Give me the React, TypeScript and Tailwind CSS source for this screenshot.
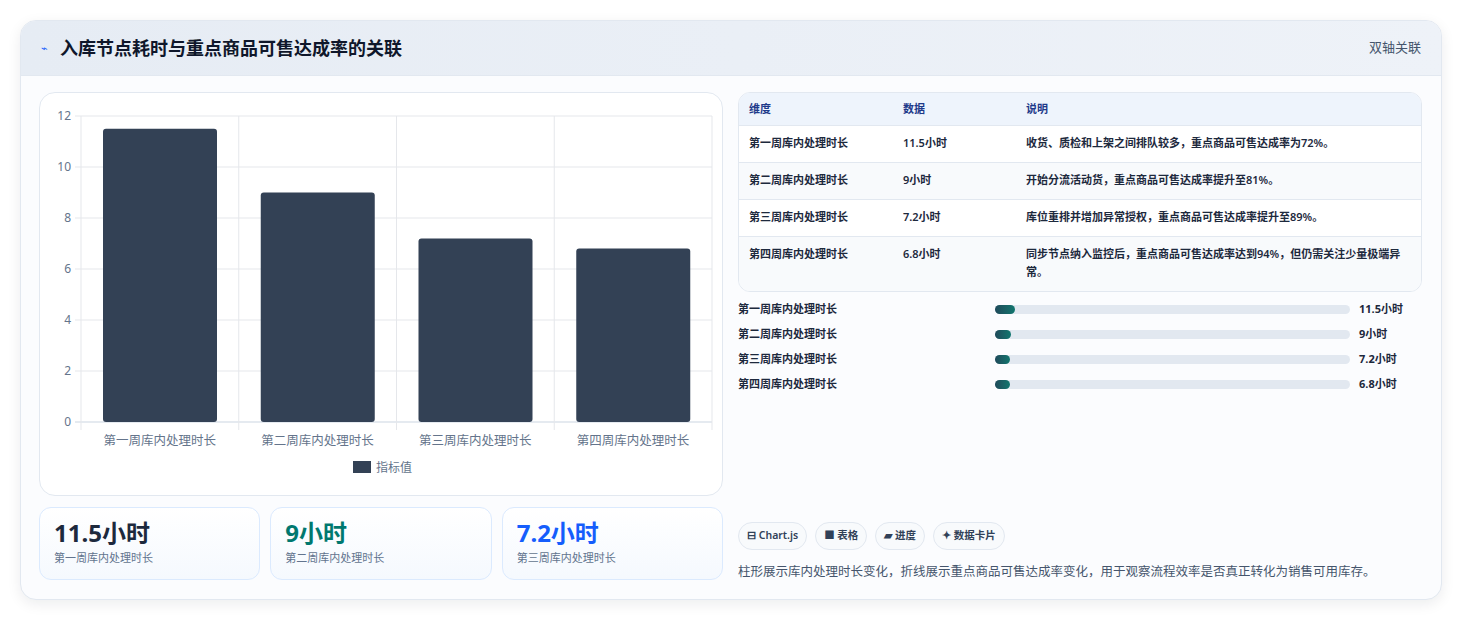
import React from "react";

const rows = [
  ["第一周库内处理时长", "11.5小时", "收货、质检和上架之间排队较多，重点商品可售达成率为72%。"],
  ["第二周库内处理时长", "9小时", "开始分流活动货，重点商品可售达成率提升至81%。"],
  ["第三周库内处理时长", "7.2小时", "库位重排并增加异常授权，重点商品可售达成率提升至89%。"],
  ["第四周库内处理时长", "6.8小时", "同步节点纳入监控后，重点商品可售达成率达到94%，但仍需关注少量极端异常。"],
];
const vals = [11.5, 9, 7.2, 6.8];
const fills = [20, 16, 15, 15];

function Chart() {
  const x0 = 41, w = 631, y0 = 329, y12 = 23;
  const sy = (v: number) => y0 - ((y0 - y12) * v) / 12;
  const cw = w / 4;
  return (
    <svg width="684" height="404" className="block">
      {[0, 2, 4, 6, 8, 10, 12].map((t) => (
        <g key={t}>
          <line x1={x0 - 6} x2={x0 + w} y1={sy(t)} y2={sy(t)} stroke={t === 0 ? "#cbd5e1" : "#e5e7eb"} />
          <text x={x0 - 10} y={sy(t) + 4} textAnchor="end" fontSize="12" fill="#64748b">{t}</text>
        </g>
      ))}
      {[0, 1, 2, 3, 4].map((i) => (
        <line key={i} x1={x0 + i * cw} x2={x0 + i * cw} y1={y12} y2={y0 + 8} stroke="#e5e7eb" />
      ))}
      {vals.map((v, i) => (
        <g key={i}>
          <rect x={x0 + i * cw + 22} y={sy(v)} width={114} height={y0 - sy(v)} rx="3" fill="#334155" />
          <text x={x0 + i * cw + cw / 2} y={352} textAnchor="middle" fontSize="12.5" fill="#64748b">{rows[i][0]}</text>
        </g>
      ))}
      <rect x="313" y="368" width="18" height="12" fill="#334155" />
      <text x="336" y="379" fontSize="12" fill="#64748b">指标值</text>
    </svg>
  );
}

export default function App() {
  return (
    <div className="w-[1462px] h-[620px] bg-white pt-5 px-5" style={{ fontFamily: '"Noto Sans","Noto Sans CJK SC",sans-serif' }}>
      <div className="w-[1422px] h-[580px] rounded-2xl border border-slate-200 shadow-[0_4px_14px_rgba(15,23,42,0.08)] overflow-hidden flex flex-col bg-[#fbfcfe]">
        <div className="h-[55px] shrink-0 flex items-center justify-between px-5 bg-gradient-to-r from-[#e6ecf4] to-[#eef2f8] border-b border-slate-200">
          <div className="flex items-center gap-3">
            <span className="text-[11px] text-blue-600">⌁</span>
            <span className="text-[18px] font-bold text-slate-900">入库节点耗时与重点商品可售达成率的关联</span>
          </div>
          <span className="text-[13px] text-slate-600">双轴关联</span>
        </div>
        <div className="flex gap-[15px] px-[18px] pt-[16px] pb-[18px] flex-1">
          <div className="w-[684px] flex flex-col gap-[11px]">
            <div className="h-[404px] rounded-2xl border border-slate-200 bg-white overflow-hidden">
              <Chart />
            </div>
            <div className="grid grid-cols-3 gap-[10px]">
              {[["11.5小时", "text-slate-800"], ["9小时", "text-teal-700"], ["7.2小时", "text-blue-600"]].map(([v, c], i) => (
                <div key={i} className="h-[73px] rounded-xl border border-blue-100 bg-gradient-to-b from-white to-[#f5f9fe] px-[14px] pt-[9px]">
                  <div className={"text-[24px] font-bold leading-[32px] " + c}>{v}</div>
                  <div className="text-[11px] text-slate-500 mt-[1px]">{rows[i][0]}</div>
                </div>
              ))}
            </div>
          </div>
          <div className="w-[684px] flex flex-col justify-between">
            <div>
              <div className="rounded-xl border border-slate-200 overflow-hidden bg-white text-[11px]">
                <div className="flex h-[33px] items-center bg-[#eef4fc] border-b border-slate-200 font-bold text-[#1e3a8a]">
                  <div className="w-[164px] pl-[10px]">维度</div>
                  <div className="w-[123px]">数据</div>
                  <div className="flex-1">说明</div>
                </div>
                {rows.map((r, i) => (
                  <div key={i} className={"flex py-[10px] font-semibold text-slate-800 " + (i < 3 ? "border-b border-slate-200 " : "") + (i % 2 === 1 ? "bg-[#f8fafc]" : "bg-white")}>
                    <div className="w-[164px] pl-[10px] leading-[14px]">{r[0]}</div>
                    <div className="w-[123px] leading-[14px]">{r[1]}</div>
                    <div className="flex-1 pr-[8px] leading-[18px] -mt-[2px]">{r[2]}</div>
                  </div>
                ))}
              </div>
              <div className="mt-[10px] flex flex-col gap-[10px]">
                {rows.map((r, i) => (
                  <div key={i} className="flex items-center h-[15px] text-[11px] font-semibold text-slate-800">
                    <div className="w-[257px]">{r[0]}</div>
                    <div className="w-[355px] h-[9px] rounded-full bg-slate-200">
                      <div className="h-full rounded-full bg-gradient-to-r from-[#1e4a5a] to-[#0f766e]" style={{ width: fills[i] }} />
                    </div>
                    <div className="ml-[9px] font-bold">{r[1]}</div>
                  </div>
                ))}
              </div>
            </div>
            <div>
              <div className="flex gap-[8px]">
                {["⊟ Chart.js", "■ 表格", "▰ 进度", "✦ 数据卡片"].map((t) => (
                  <span key={t} className="h-[28px] px-[8px] flex items-center rounded-full border border-slate-200 bg-[#f8fafc] text-[10.5px] font-semibold text-slate-700">{t}</span>
                ))}
              </div>
              <div className="mt-[13px] text-[12.5px] text-slate-600 leading-[18px]">柱形展示库内处理时长变化，折线展示重点商品可售达成率变化，用于观察流程效率是否真正转化为销售可用库存。</div>
            </div>
          </div>
        </div>
      </div>
    </div>
  );
}
